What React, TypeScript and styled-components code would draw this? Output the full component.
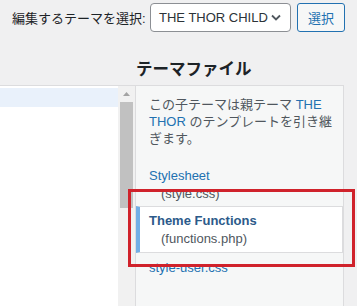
import React from 'react'
import styled, { createGlobalStyle } from 'styled-components'

const GlobalStyle = createGlobalStyle`
  body {
    margin: 0;
    background: #f0f0f1;
    font-family: "Liberation Sans", "Noto Sans CJK JP", sans-serif;
    color: #1d2327;
  }
`

const Page = styled.div`
  position: relative;
  width: 357px;
  height: 306px;
  overflow: hidden;
`

const TopBar = styled.div`
  display: flex;
  align-items: center;
  height: 29px;
  padding: 3px 0 0 12px;
`

const Label = styled.label`
  flex-shrink: 0;
  width: 133px;
  font-size: 13px;
  color: #1d2327;
  margin-right: 5px;
  white-space: nowrap;
`

const SelectBox = styled.div`
  box-sizing: border-box;
  flex-shrink: 0;
  display: flex;
  align-items: center;
  justify-content: space-between;
  width: 141px;
  height: 29px;
  padding: 0 9px 0 8px;
  background: #fff;
  border: 1px solid #8c8f94;
  border-radius: 4px;
  font-size: 13px;
  color: #2c3338;
  white-space: nowrap;
`

const Button = styled.button`
  box-sizing: border-box;
  flex-shrink: 0;
  width: 48px;
  height: 29px;
  margin-left: 6px;
  background: #f6f7f7;
  border: 1px solid #2271b1;
  border-radius: 3px;
  color: #2271b1;
  font-family: inherit;
  font-size: 13px;
  padding: 0;
`

const Heading = styled.h2`
  margin: 25px 0 4px 136px;
  font-size: 16.5px;
  line-height: 24px;
  font-weight: 700;
  color: #1d2327;
`

const Main = styled.div`
  display: flex;
  height: 230px;
`

const CodeArea = styled.div`
  width: 118px;
  background: #fff;
  border-top: 1px solid #dcdcde;
  padding-top: 2px;
`

const ActiveLine = styled.div`
  height: 19px;
  background: #e9f1fb;
`

const ScrollTrack = styled.div`
  display: flex;
  flex-direction: column;
  width: 17px;
  background: #f1f1f1;
  border-top: 1px solid #dcdcde;
`

const ArrowUp = styled.div`
  display: flex;
  align-items: center;
  justify-content: center;
  height: 16px;
`

const Thumb = styled.div`
  height: 106px;
  margin: 0 2px;
  background: #c1c1c1;
`

const Panel = styled.div`
  box-sizing: border-box;
  width: 209px;
  background: #f6f7f7;
  border: 1px solid #dcdcde;
  border-bottom: none;
  padding: 10px 0 0 13px;
`

const Description = styled.p`
  margin: 0 4px 20px 0;
  font-size: 13px;
  line-height: 17px;
  color: #50575e;
`

const ParentLink = styled.span`
  color: #2271b1;
`

const FileList = styled.ul`
  list-style: none;
  margin: 0;
  padding: 0;
  font-size: 13px;
  line-height: 18px;
`

const FileItem = styled.li<{ $current?: boolean }>`
  margin: ${(p) => (p.$current ? '3px 0 6px -13px' : '0')};
  padding: ${(p) => (p.$current ? '5px 0 4px 9px' : '0')};
  background: ${(p) => (p.$current ? '#fff' : 'transparent')};
  border: ${(p) => (p.$current ? '1px solid #dcdcde' : 'none')};
  border-left: ${(p) => (p.$current ? '4px solid #72aee6' : 'none')};
`

const FileName = styled.div<{ $current?: boolean }>`
  color: ${(p) => (p.$current ? '#2c5a8a' : '#2271b1')};
  font-weight: ${(p) => (p.$current ? 600 : 400)};
`

const FilePath = styled.div`
  padding-left: 12px;
  color: #50575e;
`

const Highlight = styled.div`
  position: absolute;
  left: 128px;
  top: 189px;
  width: 227px;
  height: 78px;
  box-sizing: border-box;
  border: 3px solid #d0222b;
  pointer-events: none;
`

const files = [
  { name: 'Stylesheet', path: '(style.css)' },
  { name: 'Theme Functions', path: '(functions.php)', current: true },
  { name: 'style-user.css' },
]

export default function App() {
  return (
    <Page>
      <GlobalStyle />
      <TopBar>
        <Label>編集するテーマを選択:</Label>
        <SelectBox>
          <span>THE THOR CHILD</span>
          <svg width="10" height="7" viewBox="0 0 10 7">
            <path d="M1 1.5 L5 5.5 L9 1.5" fill="none" stroke="#50575e" strokeWidth="1.8" />
          </svg>
        </SelectBox>
        <Button>選択</Button>
      </TopBar>
      <Heading>テーマファイル</Heading>
      <Main>
        <CodeArea>
          <ActiveLine />
        </CodeArea>
        <ScrollTrack>
          <ArrowUp>
            <svg width="7" height="4" viewBox="0 0 7 4">
              <path d="M0 4 L3.5 0 L7 4 Z" fill="#a3a3a3" />
            </svg>
          </ArrowUp>
          <Thumb />
        </ScrollTrack>
        <Panel>
          <Description>
            この子テーマは親テーマ <ParentLink>THE THOR</ParentLink> のテンプレートを引き継ぎます。
          </Description>
          <FileList>
            {files.map((f) => (
              <FileItem key={f.name} $current={f.current}>
                <FileName $current={f.current}>{f.name}</FileName>
                {f.path && <FilePath>{f.path}</FilePath>}
              </FileItem>
            ))}
          </FileList>
        </Panel>
      </Main>
      <Highlight />
    </Page>
  )
}
